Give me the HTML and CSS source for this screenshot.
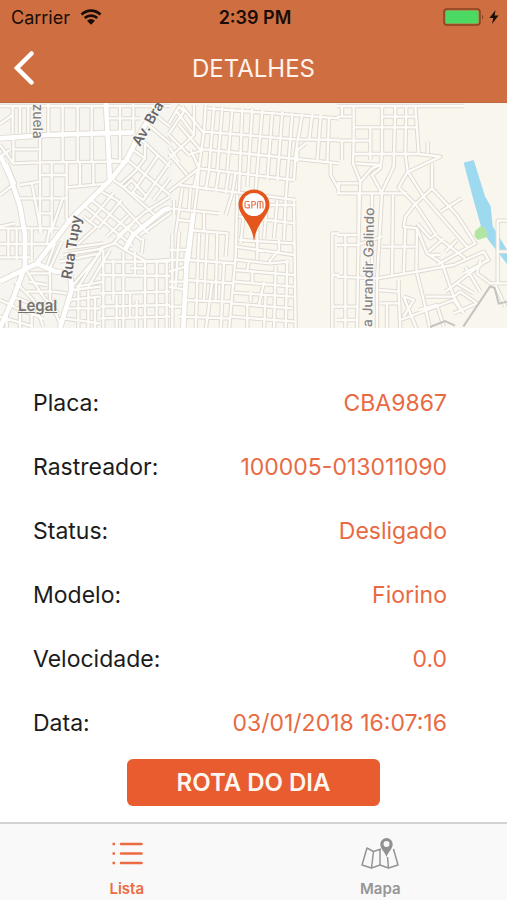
FILE: index.html
```html
<!DOCTYPE html>
<html lang="pt-BR">
<head>
<meta charset="utf-8">
<meta name="viewport" content="width=device-width, initial-scale=1">
<title>Detalhes</title>
<link rel="stylesheet" href="styles.css">
</head>
<body>
<div class="app">
  <header class="top">
    <div class="status">
      <div class="carrier">
        <span>Carrier</span>
        <svg class="wifi" viewBox="0 0 22 16" aria-hidden="true">
          <path d="M1.500 5.600C7 .400 15 .400 20.500 5.600M4.700 9.100C8.300 5.900 13.700 5.900 17.300 9.100" fill="none" stroke="#180c06" stroke-width="2.700"/>
          <path d="M7 11.700Q11 8.500 15 11.700L11 15.800Z" fill="#180c06"/>
        </svg>
      </div>
      <time class="clock">2:39 PM</time>
      <div class="power">
        <svg class="battery" viewBox="0 0 42 18" aria-hidden="true">
          <rect x="1" y="1" width="36" height="16" rx="3" fill="none" stroke="#87421f" stroke-width="1.500"/>
          <rect x="2.500" y="2.500" width="33" height="13" rx="1.500" fill="#4bd964"/>
          <path d="M39 6.500q2.500 2.500 0 5z" fill="#87421f"/>
        </svg>
        <svg class="bolt" viewBox="0 0 10 14" aria-hidden="true"><path d="M6.500 0L0.500 8H4.300L3 14L9.500 5.500H5.600Z" fill="#180c06"/></svg>
      </div>
    </div>
    <div class="nav">
      <button class="back" type="button" aria-label="Voltar">
        <svg viewBox="0 0 20 34" aria-hidden="true"><path d="M17.500 2.500L3 17L17.500 31.500" fill="none" stroke="#fff" stroke-width="4.500" stroke-linecap="round" stroke-linejoin="miter"/></svg>
      </button>
      <h1>DETALHES</h1>
    </div>
  </header>

  <section class="map" aria-label="Mapa">
    <svg class="streets" viewBox="0 0 1521 675" preserveAspectRatio="xMidYMid slice">
      <defs>
        <g id="minor">
          <g transform="translate(0 -9)">
            <path d="M0 18H510M0 72L38 45M38 20V100M60 20V100M85 20V100M145 10V102M120 20V400M188 18V185M233 18V185M275 18V185M40 115V185M40 148H118M0 135L40 190L120 187L370 185M0 170L30 150"/>
            <path d="M155 185V400M200 185V360M240 185V258M280 185V255M200 262L330 250M120 225H198M95 250L125 400M60 255L120 245M20 190L45 250L0 285M55 295H200M120 340H155M110 385H175M0 385H150L140 430M0 432H150M25 385V475M50 385V480M95 385V480M0 472H90M0 380L45 370M190 290L155 390"/>
            <path d="M320 55H420M320 100L400 97M360 18V185M330 180L375 185M400 10V100M340 240L372 262L395 240L440 290M380 178L510 285M400 150L435 175M415 110L510 200M440 70L510 130M460 40L510 80M435 130L435 175L405 215L360 255M475 165L400 275M510 185L430 300L395 275M510 235L460 300"/>
            <path d="M250 315L400 440M275 300L425 420M305 275L350 300L445 400M372 262L470 350M270 365L340 280M295 385L365 300M340 430L400 370M320 410L385 345M510 290L430 340L350 410M420 405L510 340M300 445L345 430L380 452L440 485L510 480M430 415L425 460M250 350L290 380L235 430"/>
            <path d="M165 430L140 500M185 425L150 505M200 445L310 430M190 465L310 445M180 485L300 460L215 560M310 440L235 560M330 450L265 560M310 450V690M340 480V600M370 455V690M405 455V530M435 485V690M470 485V690M500 480V690M310 485H510M390 505H440M300 525L510 528M300 580L510 575M230 560L310 545M300 620L510 615M300 655L510 650M350 585V690M390 580V650M410 600V690"/>
            <path d="M75 505L130 590L175 640M90 520L150 520M85 545L140 555M80 575L160 575L200 580M45 545L100 600L130 680M150 500L150 600L180 670M40 590L130 625L170 600M40 620L130 655M0 600L45 620M0 650L100 680M20 640V690M60 625V690M95 640V690M215 570L300 560M205 600L300 590M200 625H300M235 560V690M265 560V690M285 590V690M190 655L300 670"/>
          </g>
          <g transform="translate(507 -9)">
            <path d="M0 70L30 20L45 35L0 100M20 30L75 105L0 175M40 20L105 100M0 105L60 165M0 140L30 185M30 75L95 150M60 165L105 148M65 150L90 205L0 275M0 160L55 225M75 15V100M110 15L105 95L90 200L85 265L75 340L60 480"/>
            <path d="M115 25L510 55M105 95L380 118L510 120M105 148L510 190M90 205L375 240M30 255L380 300M135 20L120 210M160 20L145 210M190 25L175 210M220 25L210 280M250 25L235 260M280 30L260 270M310 35L295 240M340 35L325 240M370 40L350 300M400 40L380 160L375 240M430 42L420 120M455 45L445 185M480 50L475 190M410 130L385 150V185M85 215L75 265M120 210L110 270M150 210L140 275M180 212L170 280"/>
            <path d="M200 215L190 280L170 345M205 285L200 470L180 690M230 290L215 430M265 285V440M295 295L285 415M325 300L315 415M375 300L380 690M210 350L380 370M210 420L375 430M275 315H380M350 300L345 420M0 325L150 340M40 265L20 400M65 265L60 330M30 360L75 365M60 390L175 400L170 470M105 340V395M15 300V345"/>
            <path d="M200 440L375 465M195 478L300 490L360 485M200 510L375 525M195 545L375 560M190 578L375 590M185 610L370 625M185 650L380 665M240 480L235 510M300 485L330 450V420M265 430V480M320 500L315 690M355 480L350 690M250 515V550M285 545L270 615M245 575V605M290 585L285 690M235 610V690"/>
            <path d="M10 400V690M30 395L20 560M50 460V500L0 515M0 450H60M0 480H60M0 545H55M0 560L50 570M90 400L80 690M115 400L105 600M145 400L140 600M60 480L195 490M50 540L190 550M40 600L185 605M30 650L180 655M130 545L110 690M165 490L155 690M0 620H40"/>
            <path d="M485 190V225L510 270M510 400H490V690M490 525H510M490 620H510"/>
          </g>
          <g transform="translate(1011 -9)">
            <path d="M0 50H45M50 15L50 120L48 190L70 245L65 400L60 690M0 18H235L380 18M100 85V180M135 20V160L130 205L105 225L135 280L120 540V690M175 20L170 200L135 275M208 20L205 160L212 215M235 18L245 158M50 82H240M135 50H240M0 122H100M15 125V180M15 18V50M50 162H245L310 170L215 215M272 125V160M55 190L130 195M70 245L105 205L130 195M0 250H65M0 280H210M5 250V280M285 190V265"/>
            <path d="M212 215L185 262L235 312L300 410L385 475M212 215L260 290L390 440M235 312L285 265L360 345L415 430L300 495M310 335L375 295M235 312L205 350L200 380L240 385L270 460L315 490L350 590L380 640M240 370L280 415L300 400M275 455L320 415M280 465H310M325 455L360 420"/>
            <path d="M168 285L165 530M205 380L200 525M0 405H60M25 405V690M0 435H60L135 410M135 440H235M65 280V400M105 280V540M240 385L238 520M0 530L120 535L240 515L350 495L440 455L455 480L380 520M325 575L450 480M350 590L370 575L420 610L350 640M385 500L430 575M430 480L420 520L460 550M360 550L410 580"/>
            <path d="M125 570L185 575V540M130 610H185M185 575L190 690M150 610V690M200 590L240 690M200 650L230 600L200 590M240 520L260 600L280 690M190 660L350 600L380 640M245 630L300 615L320 680M265 590L350 590M0 620H60M0 660H60"/>
            <path d="M510 362H482V455H510M482 455V550M455 550H510M475 555L505 620"/>
          </g>
        </g>
        <g id="major">
          <path d="M480 -9L415 100L380 170L330 232L215 345L110 482L0 535M318 0L330 232M0 156L30 220L60 310L75 395L75 490L40 585L0 675M110 482L165 505L210 510L215 560L180 675M0 106L140 96L400 88M510 315L490 322L400 395L375 440M580 330L560 480L550 675"/>
        </g>
      </defs>
      <rect width="1521" height="675" fill="#f9f6ee"/>
      <path d="M0 0H520V675H0Z" fill="#f7f5ef"/>
      <path d="M1391 179L1421 171L1455 280L1472 310L1478 370L1521 440V483L1472 420L1447 384L1423 300Z" fill="#9ddaf0"/>
      <path d="M1425 384L1442 370L1458 376L1461 402L1433 411L1423 399Z" fill="#b1e5a2"/>
      <use href="#minor" class="casing"/>
      <use href="#major" class="casing wide"/>
      <use href="#minor" class="road"/>
      <use href="#major" class="road wide"/>
      <path d="M1390 671L1470 550L1484 555L1496 602L1521 596M1290 672L1335 654L1365 668" fill="none" stroke="#c5c3c0" stroke-width="6"/>
      <g class="street-names">
        <text transform="translate(99 2) rotate(90)" class="light">zuela</text>
        <text transform="translate(420 132) rotate(-60)">Av. Bra</text>
        <text transform="translate(214 530) rotate(-81)">Rua Tupy</text>
        <text transform="translate(1116 672) rotate(-89)" class="light">a Jurandir Galindo</text>
      </g>
    </svg>
    <a class="legal" href="#legal">Legal</a>
    <svg class="pin" viewBox="0 0 32 52" aria-label="GPM">
      <path d="M16 .500C7.500.500.500 7.300.500 15.800C.500 25 11 33 14.600 45L16 52L17.400 45C21 33 31.500 25 31.500 15.800C31.500 7.300 24.500.500 16 .500Z" fill="#e4561b"/>
      <circle cx="16" cy="15.500" r="11.500" fill="#fff"/>
      <path d="M11.500 12.500H8.500Q7 12.500 7 14V17.300Q7 18.800 8.500 18.800H11.300V15.800H9.500M13.800 19.500V12.500H16Q17.500 12.500 17.500 14.200T16 16H14M19.500 19.500V14Q19.500 12.500 21 12.500H23.500Q25 12.500 25 14V19.500M22.250 12.500V19.500" fill="none" stroke="#e97850" stroke-width="1.200"/>
    </svg>
  </section>

  <main>
    <dl>
      <div><dt>Placa:</dt><dd>CBA9867</dd></div>
      <div><dt>Rastreador:</dt><dd>100005-013011090</dd></div>
      <div><dt>Status:</dt><dd>Desligado</dd></div>
      <div><dt>Modelo:</dt><dd>Fiorino</dd></div>
      <div><dt>Velocidade:</dt><dd>0.0</dd></div>
      <div><dt>Data:</dt><dd>03/01/2018 16:07:16</dd></div>
    </dl>
    <button class="route" type="button">ROTA DO DIA</button>
  </main>

  <nav class="tabs">
    <a class="tab active" href="#lista">
      <svg viewBox="0 0 40 34" aria-hidden="true"><path d="M14 7H34.500M14 16.500H34.500M14 26H34.500" stroke="#eb6b43" stroke-width="2.600" stroke-linecap="round"/><path d="M5.500 7H8M5.500 16.500H8M5.500 26H8" stroke="#eb6b43" stroke-width="2.400"/></svg>
      <span>Lista</span>
    </a>
    <a class="tab" href="#mapa">
      <svg viewBox="0 0 40 34" aria-hidden="true">
        <path d="M21 12L13.500 14.500L7 11L2 28L11.500 31L20 28L28.500 31L38 28L33.500 12M13.500 14.500L11.500 31M20 13V28M27.500 20L28.500 31" fill="none" stroke="#959595" stroke-width="1.500" stroke-linejoin="round"/>
        <path fill-rule="evenodd" d="M26.500 1A6.200 6.200 0 0 0 20.300 7.500C20.300 11.500 25 15 26.500 20C28 15 32.700 11.500 32.700 7.500A6.200 6.200 0 0 0 26.500 1ZM26.500 4A3 3 0 1 1 26.500 10A3 3 0 0 1 26.500 4Z" fill="#919191"/>
      </svg>
      <span>Mapa</span>
    </a>
  </nav>
</div>
</body>
</html>
```
FILE: styles.css
```css
* { box-sizing: border-box; }

body {
  margin: 0;
  background: #fff;
  color: #1c1c1c;
  font-family: Inter, "Liberation Sans", sans-serif;
}

button { font: inherit; border: 0; cursor: pointer; }
a { text-decoration: none; }
svg { display: block; }

.app {
  min-height: 100vh;
  display: flex;
  flex-direction: column;
}

.top {
  background: #cf6f41;
  border-bottom: 1px solid #bd6a40;
}

.status {
  display: grid;
  grid-template-columns: 1fr auto 1fr;
  align-items: center;
  height: 34px;
  padding: 0 8px 0 11px;
  color: #180c06;
  font-size: 18px;
}

.carrier { display: flex; align-items: center; gap: 10px; }
.wifi { width: 22px; height: 16px; }
.clock { font-weight: 600; }
.power { display: flex; align-items: center; justify-content: flex-end; gap: 4px; }
.battery { width: 42px; height: 18px; }
.bolt { width: 10px; height: 14px; }

.nav {
  display: grid;
  grid-template-columns: 1fr auto 1fr;
  align-items: center;
  height: 68px;
}

.back {
  justify-self: start;
  padding: 0 14px;
  background: none;
}
.back svg { width: 20px; height: 34px; }

h1 {
  margin: 0;
  color: #fff3ec;
  font-size: 24px;
  font-weight: 400;
}

.map {
  position: relative;
  height: 225px;
  overflow: hidden;
}

.streets { width: 100%; height: 100%; }
.casing { fill: none; stroke: #dfdad1; stroke-width: 13; stroke-linejoin: round; }
.casing.wide { stroke-width: 19; }
.road { fill: none; stroke: #fdfcf9; stroke-width: 7; stroke-linejoin: round; }
.road.wide { stroke: #fff; stroke-width: 14; }

.street-names {
  fill: #68676a;
  stroke: #fbf9f4;
  stroke-width: 6px;
  paint-order: stroke;
  font: 600 43px Inter, sans-serif;
}
.street-names .light { fill: #858384; font-weight: 500; font-size: 41px; }

.legal {
  position: absolute;
  left: 18px;
  bottom: 12px;
  color: #777571;
  font-size: 15px;
  font-weight: 600;
  line-height: 20px;
  text-decoration: underline;
}

.pin {
  position: absolute;
  left: 50%;
  top: 86px;
  width: 32px;
  height: 52px;
  transform: translateX(-50%);
}

main {
  flex: 1;
  display: flex;
  flex-direction: column;
  align-items: center;
  padding: 43px 0 16px;
}

dl {
  align-self: stretch;
  margin: 0;
  padding: 0 60px 0 33px;
  font-size: 23px;
}

dl div {
  display: flex;
  justify-content: space-between;
  align-items: center;
  height: 64px;
}

dd { margin: 0; color: #e86a43; }

.route {
  width: 50%;
  height: 47px;
  margin-top: 4px;
  border-radius: 6px;
  background: #e85c30;
  color: #fff6f1;
  font-size: 24px;
  font-weight: 600;
}

.tabs {
  display: grid;
  grid-template-columns: 1fr 1fr;
  height: 79px;
  border-top: 2px solid #d3d3d3;
  background: #f9f9f9;
}

.tab {
  display: flex;
  flex-direction: column;
  align-items: center;
  gap: 8px;
  padding-top: 13px;
  color: #959595;
  font-size: 15px;
  font-weight: 600;
  line-height: 20px;
}
.tab svg { width: 40px; height: 34px; }
.active { color: #eb6b43; }
```
